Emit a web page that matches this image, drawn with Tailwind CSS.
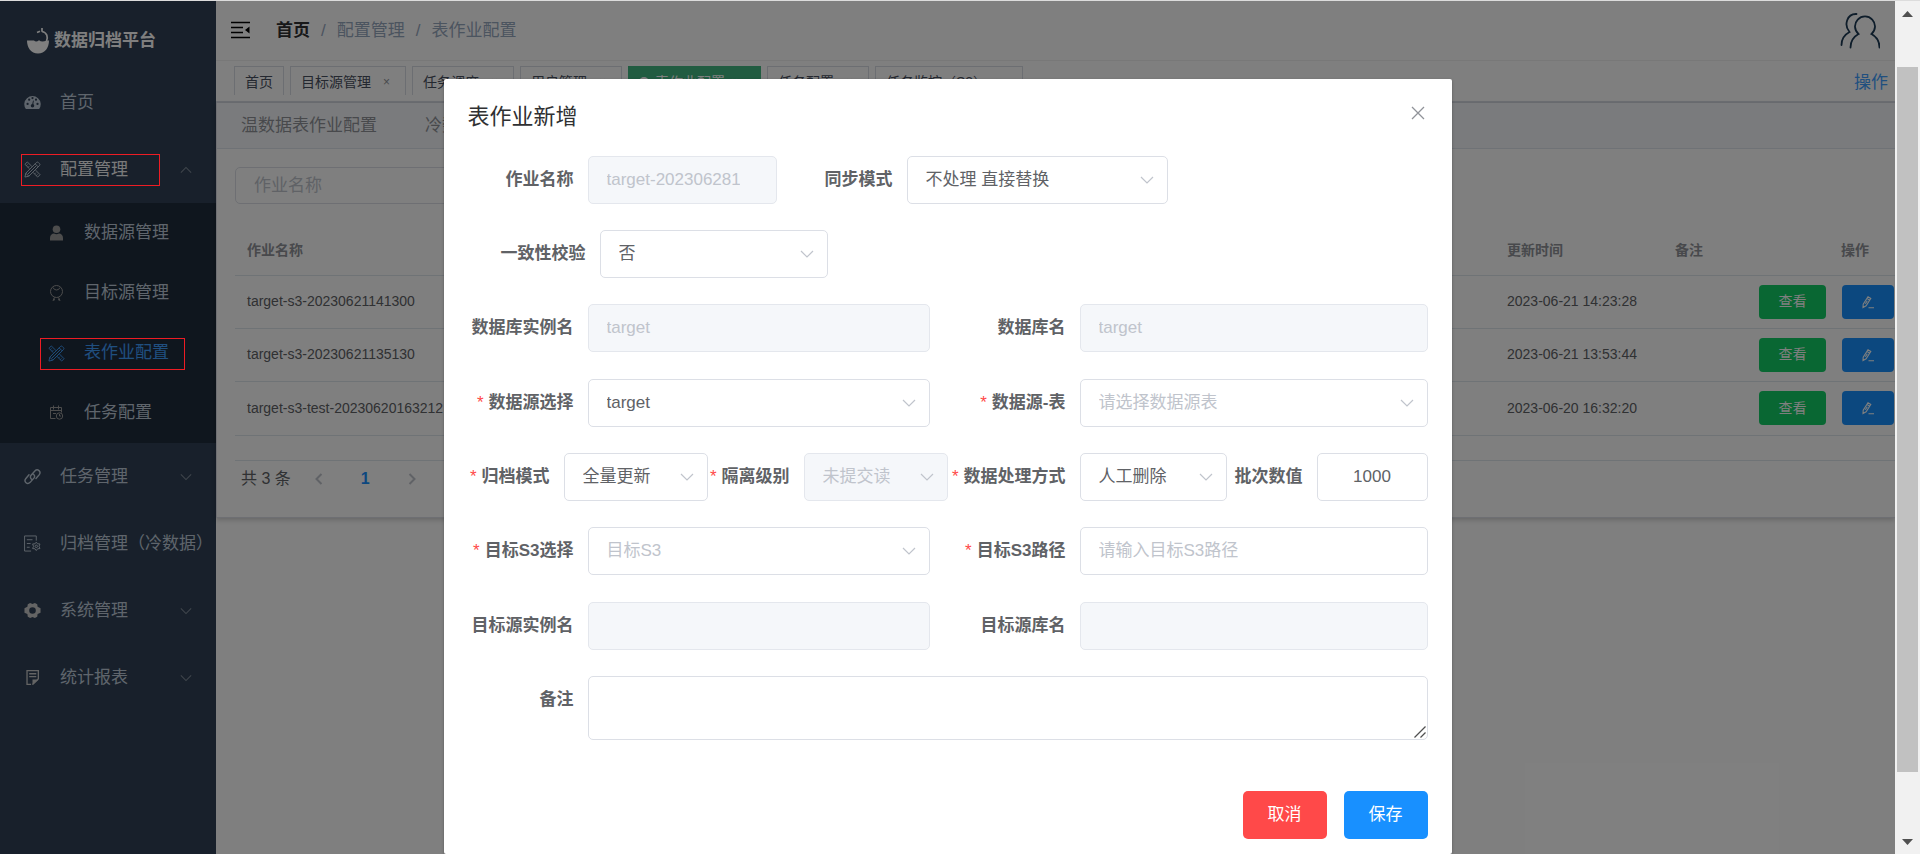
<!DOCTYPE html>
<html lang="zh-CN">
<head>
<meta charset="utf-8">
<title>数据归档平台</title>
<script src="https://cdn.jsdelivr.net/npm/@tailwindcss/browser@4"></script>
</head>
<body class="overflow-hidden font-['Liberation_Sans','Noto_Sans_CJK_SC',sans-serif] text-[17px] text-[#606266]">
<svg class="hidden">
  <symbol id="down" viewBox="0 0 14 14"><path d="M1 4l6 6 6-6" fill="none" stroke="currentColor" stroke-width="1.2"/></symbol>
  <symbol id="tools" viewBox="0 0 18 18"><g fill="none" stroke="currentColor" stroke-width="1"><path d="M5.800 8.200L1 3.500 3.500 1l4.800 4.700M9.700 12.300L14.500 17l2.500-2.500-4.700-4.800M2.500 5l1.300-1.300M4.300 6.800l1.300-1.300M13 15.500l1.300-1.300M11.200 13.700l1.300-1.300"/><path d="M1 17l.9-4.100L13.200 1.600q1-1 2 0l1.200 1.200q1 1 0 2L5.100 16.100zM1.900 12.900l3.200 3.200M11.800 3l3.200 3.200M4 14L13 5"/></g></symbol>
  <symbol id="edit" viewBox="0 0 14 14"><path d="M2 12.500l.2-3.400L7 1.800l2.800 1.700-4.700 7.300zM5.900 3.400l2.800 1.800M4.300 8.700l2-3M7.500 12.800H13" fill="none" stroke="currentColor" stroke-width="1.1"/></symbol>
</svg>

<div class="flex h-screen flex-col overflow-hidden border-t border-[#dcdcdc]">
<div class="flex min-h-0 flex-1">
<div class="relative flex min-w-0 flex-1 overflow-hidden bg-white">

  <aside class="w-[216px] shrink-0 bg-[#304156] text-[#bfcbd9]">
    <div class="flex h-[68px] items-center pt-3 pl-[26px]">
      <svg class="size-7" viewBox="0 0 28 28"><path d="M1 13.500h7q2 2.200 5-.2 3 2.500 7.500.2H23c0 7-4 13-11 13S1 20.500 1 13.500z" fill="#fff"/><path d="M20.500 14c1.800-4 .5-8.500-4.500-9.500M11 5.500l3-1.200M16 4.800V1" stroke="#fff" stroke-width="1.700" fill="none"/></svg>
      <span class="text-[17px] font-bold text-white">数据归档平台</span>
    </div>
    <nav>
      <a href="#" class="flex h-[67px] items-center gap-[19px] pl-6">
        <svg class="size-[17px]" viewBox="0 0 18 18"><path d="M2 16a8.700 8.700 0 1 1 14 0z" fill="currentColor"/><g fill="#304156"><circle cx="3.800" cy="10.500" r="1.200"/><circle cx="5.500" cy="6" r="1.200"/><circle cx="9" cy="4.300" r="1.200"/><circle cx="12.700" cy="6" r="1.200"/><circle cx="14.300" cy="10.500" r="1.200"/><circle cx="9" cy="12.500" r="1.900"/><path d="M8.400 12l1.200-5 .8.200-.7 5z"/></g></svg>首页</a>
      <a href="#" class="flex h-[67px] items-center gap-[19px] pr-6 pl-6 text-[#f4f4f5]">
        <svg class="size-[17px] text-[#bfcbd9]"><use href="#tools"/></svg>配置管理
        <svg class="ml-auto size-3 rotate-180 text-[#7f8a98]"><use href="#down"/></svg></a>
      <div class="bg-[#1f2d3d]">
        <a href="#" class="flex h-[60px] items-center gap-5 pl-12">
          <svg class="size-4 text-[#9a9a9a]" viewBox="0 0 16 16" fill="currentColor"><circle cx="8.500" cy="4.300" r="3.800"/><path d="M2 15.500v-2.500c0-3 2-4.500 4-4.500q2.500 1.500 5 0c2 0 4 1.500 4 4.500v2.500z"/></svg>数据源管理</a>
        <a href="#" class="flex h-[60px] items-center gap-5 pl-12">
          <svg class="size-4 text-[#9a9a9a]" viewBox="0 0 16 16" fill="none" stroke="currentColor"><circle cx="8.500" cy="6.500" r="6"/><path d="M5 2.500q1 2.500 3.500 2.500t3.500-2.500M6.500 12.500L5 16M10.500 12.500L12 16M5 14l2 1M12 14l-2 1"/></svg>目标源管理</a>
        <a href="#" class="flex h-[60px] items-center gap-[19px] pl-12 text-[#409eff]">
          <svg class="size-[17px]"><use href="#tools"/></svg>表作业配置</a>
        <a href="#" class="flex h-[60px] items-center gap-5 pl-12">
          <svg class="size-4 text-[#9a9a9a]" viewBox="0 0 16 16" fill="none" stroke="currentColor"><path d="M7.500 13.500h-5v-11h11v5M2.500 5.500h11M5.500.5v4M10.500.5v4M5 8.500h3"/><circle cx="11.500" cy="11" r="3.200"/><path d="M11.500 9v2h1.500"/></svg>任务配置</a>
      </div>
      <a href="#" class="flex h-[67px] items-center gap-[19px] pr-6 pl-6">
        <svg class="size-[17px]" viewBox="0 0 18 18" fill="none" stroke="currentColor" stroke-width="1.500" stroke-linecap="round"><path d="M8.500 12.200c-1.700-.8-2.300-3-1-4.500l4-4.500c3-3 7 .5 4.700 3.800l-3.500 4.200M9.300 6.200c1.900.8 2.500 3 1.200 4.500l-4 4.500c-3 3-7-.5-4.700-3.800l3.500-4.200"/></svg>任务管理
        <svg class="ml-auto size-3 text-[#7f8a98]"><use href="#down"/></svg></a>
      <a href="#" class="flex h-[67px] items-center gap-[19px] pl-6 whitespace-nowrap">
        <svg class="size-[17px] shrink-0" viewBox="0 0 18 18" fill="none" stroke="currentColor"><path d="M7.500 17H.6V1H13v5M3 5h6M3 9h4M3 13h3"/><circle cx="13" cy="12" r="1.300"/><path d="M13 7.500l1.300 1.800 2.600.2-1 2.500 1 2.300-2.500.3-1.400 1.900-1.400-1.900-2.500-.3 1-2.300-1-2.500 2.600-.2z"/></svg>归档管理（冷数据）</a>
      <a href="#" class="flex h-[67px] items-center gap-[19px] pr-6 pl-6">
        <svg class="size-[17px] text-[#c8c8c8]" viewBox="0 0 18 18"><path fill="currentColor" fill-rule="evenodd" d="M6.500 1l2.500 1 2.500-1 2.500 1.400.4 2.700L17.500 6.500v5l-3.100 1.300-.4 2.800-2.500 1.400-2.500-1-2.500 1L4 15.600l-.4-2.800L.5 11.500v-5l3.100-1.400L4 2.400zM9 5.500a3.500 3.500 0 1 0 0 7 3.500 3.500 0 0 0 0-7z"/></svg>系统管理
        <svg class="ml-auto size-3 text-[#7f8a98]"><use href="#down"/></svg></a>
      <a href="#" class="flex h-[67px] items-center gap-[19px] pr-6 pl-6">
        <svg class="size-[17px] text-[#c8c8c8]" viewBox="0 0 18 18" fill="none" stroke="currentColor" stroke-width="1.400"><path d="M7.500 16.300H3.200V1.700h12v9M5.500 5h7.500M5.500 8h7.500"/><path d="M9 17v-6h6.500z" fill="currentColor" fill-rule="evenodd" stroke="none"/><path d="M15.200 10.500L9 16.500"/></svg>统计报表
        <svg class="ml-auto size-3 text-[#7f8a98]"><use href="#down"/></svg></a>
    </nav>
  </aside>

  <main class="min-w-0 flex-1">
    <header class="flex h-[60px] items-center border-b border-[#f0f0f0] pr-[15px] pl-[15px]">
      <svg class="size-[19px]" viewBox="0 0 19 19"><path d="M0 1.500h19M0 6.500h12M0 11.500h12M0 16.500h19" stroke="#000" stroke-width="1.700"/><path d="M18.500 5.500v7L14 9z"/></svg>
      <nav class="ml-[26px] flex gap-[11px] text-[#97a8be]"><a href="#" class="font-bold text-[#303133]">首页</a><span>/</span><a href="#">配置管理</a><span>/</span><a href="#">表作业配置</a></nav>
      <svg class="ml-auto h-9 w-10" viewBox="0 0 40 36" fill="none" stroke="#1d3a55" stroke-width="1.800" stroke-linecap="round"><path d="M10.500 34.500c0-7 3.500-11 8-13.500a10 10 0 1 1 13 0c4.500 2.500 8 6.500 8 13.500M16.500 1C7 .5 3.500 12 9.500 19c-5.500 3-8 7-8 13"/></svg>
    </header>
    <div class="flex h-[42px] items-start gap-[6px] border-b-2 border-[#d8dce5] pt-[5px] pr-[7px] pl-[18px] text-[14px] whitespace-nowrap text-[#495060]">
      <a href="#" class="flex h-[29px] items-center border border-b-0 border-[#d8dce5] px-[10px] pt-0.5">首页</a>
      <a href="#" class="flex h-[29px] w-[116px] items-center gap-3 border border-b-0 border-[#d8dce5] px-[10px] pt-0.5">目标源管理<span class="text-[12px] text-[#909399]">×</span></a>
      <a href="#" class="flex h-[29px] w-[102px] items-center gap-3 border border-b-0 border-[#d8dce5] px-[10px] pt-0.5">任务调度<span class="text-[12px] text-[#909399]">×</span></a>
      <a href="#" class="flex h-[29px] w-[102px] items-center gap-3 border border-b-0 border-[#d8dce5] px-[10px] pt-0.5">用户管理<span class="text-[12px] text-[#909399]">×</span></a>
      <a href="#" class="flex h-[29px] w-[133px] items-center gap-[6px] border border-b-0 border-[#42b983] bg-[#42b983] px-[10px] pt-0.5 text-white"><i class="size-[10px] rounded-full bg-white"></i>表作业配置<span class="text-[12px]">×</span></a>
      <a href="#" class="flex h-[29px] w-[102px] items-center gap-3 border border-b-0 border-[#d8dce5] px-[10px] pt-0.5">任务配置<span class="text-[12px] text-[#909399]">×</span></a>
      <a href="#" class="flex h-[29px] w-[148px] items-center gap-2 border border-b-0 border-[#d8dce5] px-[10px] pt-0.5">任务监控（S3）<span class="text-[12px] text-[#909399]">×</span></a>
      <a href="#" class="mt-[5px] ml-auto text-[17px] leading-6 text-[#409eff]">操作</a>
    </div>
    <section class="border-l border-b border-[#dcdfe6] shadow-[0_2px_5px_rgba(0,0,0,0.2)]">
      <div class="flex h-[46px] items-center gap-12 border-b border-[#dfe4ed] bg-[#f5f7fa] px-6 text-[#909399]"><a href="#">温数据表作业配置</a><a href="#">冷数据表作业配置</a></div>
      <div class="pt-[18px] pl-[18px]">
        <input aria-label="作业名称" placeholder="作业名称" class="h-[37px] w-60 rounded-[5px] border border-[#dcdfe6] px-[18px] placeholder:text-[#c0c4cc]">
        <table class="mt-[22px] w-full table-fixed border-b border-[#dfe6ec] text-left text-[14px]">
          <thead class="text-[#909399]"><tr class="h-[49px] border-b border-[#dfe6ec]"><th class="pl-3">作业名称</th><th class="w-[168px]">更新时间</th><th class="w-[84px]">备注</th><th class="w-[136px] pl-[82px]">操作</th></tr></thead>
          <tbody>
            <tr class="h-[53px] border-b border-[#dfe6ec]"><td class="pl-3">target-s3-20230621141300</td><td>2023-06-21 14:23:28</td><td></td><td><div class="flex gap-4"><button class="h-[34px] w-[67px] shrink-0 rounded bg-[#13ce66] text-white">查看</button><button aria-label="编辑" class="flex h-[34px] w-[52px] shrink-0 items-center justify-center rounded bg-[#1890ff] text-white"><svg class="size-[14px]"><use href="#edit"/></svg></button></div></td></tr>
            <tr class="h-[53px] border-b border-[#dfe6ec]"><td class="pl-3">target-s3-20230621135130</td><td>2023-06-21 13:53:44</td><td></td><td><div class="flex gap-4"><button class="h-[34px] w-[67px] shrink-0 rounded bg-[#13ce66] text-white">查看</button><button aria-label="编辑" class="flex h-[34px] w-[52px] shrink-0 items-center justify-center rounded bg-[#1890ff] text-white"><svg class="size-[14px]"><use href="#edit"/></svg></button></div></td></tr>
            <tr class="h-[54px] border-b border-[#dfe6ec]"><td class="pl-3">target-s3-test-20230620163212</td><td>2023-06-20 16:32:20</td><td></td><td><div class="flex gap-4"><button class="h-[34px] w-[67px] shrink-0 rounded bg-[#13ce66] text-white">查看</button><button aria-label="编辑" class="flex h-[34px] w-[52px] shrink-0 items-center justify-center rounded bg-[#1890ff] text-white"><svg class="size-[14px]"><use href="#edit"/></svg></button></div></td></tr>
            <tr class="h-[25px]"><td colspan="4"></td></tr>
          </tbody>
        </table>
        <div class="flex h-[56px] items-start pt-[6px] pl-[6px] text-[16px]">
          <span class="leading-6">共 3 条</span>
          <button aria-label="上一页" class="ml-5 flex h-6 w-4 items-center justify-center text-[#c0c4cc]"><svg class="size-[14px]" viewBox="0 0 14 14" fill="none" stroke="currentColor" stroke-width="2"><path d="M9.500 2l-5 5 5 5"/></svg></button>
          <button class="ml-[34px] leading-6 font-bold text-[#1890ff]">1</button>
          <button aria-label="下一页" class="ml-[34px] flex h-6 w-4 items-center justify-center text-[#c0c4cc]"><svg class="size-[14px]" viewBox="0 0 14 14" fill="none" stroke="currentColor" stroke-width="2"><path d="M4.500 2l5 5-5 5"/></svg></button>
        </div>
      </div>
    </section>
  </main>

  <div class="absolute inset-0 overflow-hidden bg-black/50 pt-[78px]">
    <div role="dialog" aria-labelledby="dlg-title" class="mx-auto min-h-full w-[1008px] max-w-full rounded-[2px] bg-white px-6 pt-5 shadow-[0_1px_3px_rgba(0,0,0,0.3)]">
      <div class="flex items-start justify-between">
        <h2 id="dlg-title" class="text-[22px] leading-9 text-[#303133]">表作业新增</h2>
        <button aria-label="关闭" class="mt-[6px] mr-[2px] text-[#909399]"><svg class="size-4" viewBox="0 0 16 16" fill="none" stroke="currentColor" stroke-width="1.300"><path d="M2 2l12 12M14 2L2 14"/></svg></button>
      </div>
      <form class="flex flex-col gap-[27px] pt-[21px]">
        <div class="flex flex-col gap-[26px]">
          <div class="flex">
            <label for="f1" class="w-[120px] pr-[14px] text-right leading-12 font-bold">作业名称</label>
            <input id="f1" disabled value="target-202306281" class="h-12 w-[189px] rounded-[5px] border border-[#e4e7ed] bg-[#f5f7fa] pr-9 pl-[18px] text-[#c0c4cc]">
            <label for="f2" class="w-[130px] pr-[14px] text-right leading-12 font-bold">同步模式</label>
            <div class="relative w-[261px]"><select id="f2" class="h-12 w-full appearance-none rounded-[5px] border border-[#dcdfe6] pr-9 pl-[18px]"><option>不处理 直接替换</option></select><svg class="pointer-events-none absolute top-[17px] right-[14px] size-[14px] text-[#c0c4cc]"><use href="#down"/></svg></div>
          </div>
          <div class="flex">
            <label for="f3" class="w-[132px] pr-[14px] text-right leading-12 font-bold">一致性校验</label>
            <div class="relative w-[228px]"><select id="f3" class="h-12 w-full appearance-none rounded-[5px] border border-[#dcdfe6] pr-9 pl-[18px]"><option>否</option></select><svg class="pointer-events-none absolute top-[17px] right-[14px] size-[14px] text-[#c0c4cc]"><use href="#down"/></svg></div>
          </div>
          <div class="flex">
            <label for="f4" class="w-[120px] shrink-0 pr-[14px] text-right leading-12 font-bold">数据库实例名</label>
            <input id="f4" disabled value="target" class="h-12 w-[342px] rounded-[5px] border border-[#e4e7ed] bg-[#f5f7fa] px-[18px] text-[#c0c4cc]">
            <label for="f5" class="w-[150px] shrink-0 pr-[14px] text-right leading-12 font-bold">数据库名</label>
            <input id="f5" disabled value="target" class="h-12 min-w-0 flex-1 rounded-[5px] border border-[#e4e7ed] bg-[#f5f7fa] px-[18px] text-[#c0c4cc]">
          </div>
        </div>
        <div class="flex flex-col gap-[26px]">
          <div class="flex">
            <label for="f6" class="w-[120px] shrink-0 pr-[14px] text-right leading-12 font-bold"><span class="mr-[5px] font-normal text-[#ff4949]">*</span>数据源选择</label>
            <div class="relative w-[342px]"><select id="f6" class="h-12 w-full appearance-none rounded-[5px] border border-[#dcdfe6] pr-9 pl-[18px]"><option>target</option></select><svg class="pointer-events-none absolute top-[17px] right-[14px] size-[14px] text-[#c0c4cc]"><use href="#down"/></svg></div>
            <label for="f7" class="w-[150px] shrink-0 pr-[14px] text-right leading-12 font-bold"><span class="mr-[5px] font-normal text-[#ff4949]">*</span>数据源-表</label>
            <div class="relative min-w-0 flex-1"><select id="f7" class="h-12 w-full appearance-none rounded-[5px] border border-[#dcdfe6] pr-9 pl-[18px] text-[#c0c4cc]"><option>请选择数据源表</option></select><svg class="pointer-events-none absolute top-[17px] right-[14px] size-[14px] text-[#c0c4cc]"><use href="#down"/></svg></div>
          </div>
          <div class="flex whitespace-nowrap">
            <label for="f8" class="w-24 shrink-0 pr-[14px] text-right leading-12 font-bold"><span class="mr-[5px] font-normal text-[#ff4949]">*</span>归档模式</label>
            <div class="relative w-36"><select id="f8" class="h-12 w-full appearance-none rounded-[5px] border border-[#dcdfe6] pr-9 pl-[18px]"><option>全量更新</option></select><svg class="pointer-events-none absolute top-[17px] right-[14px] size-[14px] text-[#c0c4cc]"><use href="#down"/></svg></div>
            <label for="f9" class="w-24 shrink-0 pr-[14px] text-right leading-12 font-bold"><span class="mr-[5px] font-normal text-[#ff4949]">*</span>隔离级别</label>
            <div class="relative w-36"><select id="f9" disabled class="h-12 w-full appearance-none rounded-[5px] border border-[#e4e7ed] bg-[#f5f7fa] pr-9 pl-[18px] text-[#c0c4cc] opacity-100"><option>未提交读</option></select><svg class="pointer-events-none absolute top-[17px] right-[14px] size-[14px] text-[#c0c4cc]"><use href="#down"/></svg></div>
            <label for="f10" class="w-[132px] shrink-0 pr-[14px] text-right leading-12 font-bold"><span class="mr-[5px] font-normal text-[#ff4949]">*</span>数据处理方式</label>
            <div class="relative w-[147px]"><select id="f10" class="h-12 w-full appearance-none rounded-[5px] border border-[#dcdfe6] pr-9 pl-[18px]"><option>人工删除</option></select><svg class="pointer-events-none absolute top-[17px] right-[14px] size-[14px] text-[#c0c4cc]"><use href="#down"/></svg></div>
            <label for="f11" class="w-[90px] shrink-0 pr-[14px] text-right leading-12 font-bold">批次数值</label>
            <input id="f11" value="1000" class="h-12 min-w-0 flex-1 rounded-[5px] border border-[#dcdfe6] px-[18px] text-center">
          </div>
          <div class="flex">
            <label for="f12" class="w-[120px] shrink-0 pr-[14px] text-right leading-12 font-bold"><span class="mr-[5px] font-normal text-[#ff4949]">*</span>目标S3选择</label>
            <div class="relative w-[342px]"><select id="f12" class="h-12 w-full appearance-none rounded-[5px] border border-[#dcdfe6] pr-9 pl-[18px] text-[#c0c4cc]"><option>目标S3</option></select><svg class="pointer-events-none absolute top-[17px] right-[14px] size-[14px] text-[#c0c4cc]"><use href="#down"/></svg></div>
            <label for="f13" class="w-[150px] shrink-0 pr-[14px] text-right leading-12 font-bold"><span class="mr-[5px] font-normal text-[#ff4949]">*</span>目标S3路径</label>
            <input id="f13" placeholder="请输入目标S3路径" class="h-12 min-w-0 flex-1 rounded-[5px] border border-[#dcdfe6] px-[18px] placeholder:text-[#c0c4cc]">
          </div>
        </div>
        <div class="flex flex-col gap-[26px]">
          <div class="flex">
            <label for="f14" class="w-[120px] shrink-0 pr-[14px] text-right leading-12 font-bold">目标源实例名</label>
            <input id="f14" disabled class="h-12 w-[342px] rounded-[5px] border border-[#e4e7ed] bg-[#f5f7fa] px-[18px]">
            <label for="f15" class="w-[150px] shrink-0 pr-[14px] text-right leading-12 font-bold">目标源库名</label>
            <input id="f15" disabled class="h-12 min-w-0 flex-1 rounded-[5px] border border-[#e4e7ed] bg-[#f5f7fa] px-[18px]">
          </div>
          <div class="flex">
            <label for="f16" class="w-[120px] shrink-0 pr-[14px] text-right leading-12 font-bold">备注</label>
            <div class="relative flex min-w-0 flex-1"><textarea id="f16" class="h-16 w-full resize-none rounded-[5px] border border-[#dcdfe6] px-[18px] py-[6px]"></textarea><svg class="absolute right-[2px] bottom-[2px] size-3" viewBox="0 0 12 12"><path d="M.5 11.500l11-11M6.500 11.500l5-5" stroke="#505050" stroke-width="1.300"/></svg></div>
          </div>
        </div>
        <div class="flex justify-end gap-[17px] pt-[24px]">
          <button type="button" class="h-12 w-[84px] rounded-[5px] bg-[#ff4949] text-white">取消</button>
          <button type="button" class="h-12 w-[84px] rounded-[5px] bg-[#1890ff] text-white">保存</button>
        </div>
      </form>
    </div>
  </div>
  <div class="pointer-events-none absolute top-[153px] left-[21px] h-8 w-[139px] border border-[#ed1c24]"></div>
  <div class="pointer-events-none absolute top-[337px] left-10 h-8 w-[145px] border border-[#ed1c24]"></div>
</div>

<div class="flex w-[25px] shrink-0 flex-col items-center bg-[#f1f1f1] pt-[10px] pb-[9px]">
  <svg class="h-[6px] w-[11px]" viewBox="0 0 11 6"><path d="M0 6h11L5.500 0z" fill="#505050"/></svg>
  <div class="mt-[50px] mb-[67px] w-[21px] flex-1 bg-[#c1c1c1]"></div>
  <svg class="h-[6px] w-[11px]" viewBox="0 0 11 6"><path d="M0 0h11L5.500 6z" fill="#505050"/></svg>
</div>
</div>
</div>
</body>
</html>
